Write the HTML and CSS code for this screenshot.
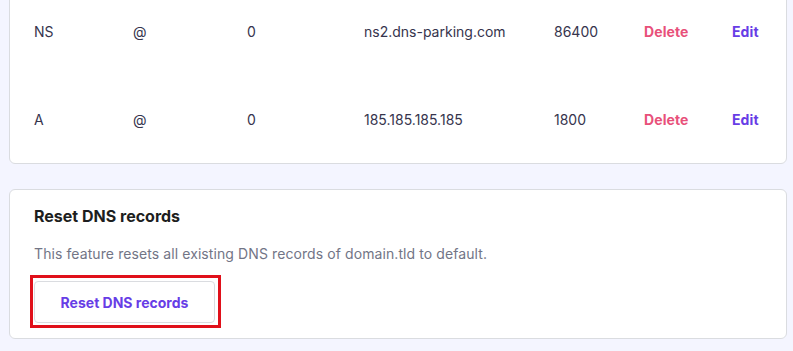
FILE: index.html
```html
<!DOCTYPE html>
<html lang="en">
<head>
<meta charset="utf-8">
<title>DNS records</title>
<link rel="stylesheet" href="styles.css">
</head>
<body>
<div class="page">
  <section class="card records">
    <div class="row">
      <span class="cell">NS</span>
      <span class="cell">@</span>
      <span class="cell">0</span>
      <span class="cell">ns2.dns-parking.com</span>
      <span class="cell">86400</span>
      <a class="cell action delete" href="#">Delete</a>
      <a class="cell action edit" href="#">Edit</a>
    </div>
    <div class="row">
      <span class="cell">A</span>
      <span class="cell">@</span>
      <span class="cell">0</span>
      <span class="cell">185.185.185.185</span>
      <span class="cell">1800</span>
      <a class="cell action delete" href="#">Delete</a>
      <a class="cell action edit" href="#">Edit</a>
    </div>
  </section>
  <section class="card reset">
    <h2 class="reset-title">Reset DNS records</h2>
    <p class="reset-text">This feature resets all existing DNS records of domain.tld to default.</p>
    <div class="highlight">
      <button class="btn-outline" type="button">Reset DNS records</button>
    </div>
  </section>
</div>
</body>
</html>
```
FILE: styles.css
```css
* { box-sizing: border-box; }
html, body {
  margin: 0;
  padding: 0;
  background: #f4f5ff;
  font-family: "Inter", "DejaVu Sans", sans-serif;
  color: #36344d;
}
.page {
  padding: 0 6px 0 9px;
  display: flex;
  flex-direction: column;
  gap: 25px;
}
.card {
  background: #fff;
  border: 1px solid #dadce0;
  border-radius: 6px;
}
.records {
  margin-top: -20px;
  padding-top: 6px;
}
.row {
  display: grid;
  grid-template-columns: 99px 114px 117px 190px 90px 88px 1fr;
  align-items: center;
  height: 88px;
  padding-left: 24px;
  font-size: 14px;
}
.cell { white-space: nowrap; }
.action {
  text-decoration: none;
  font-weight: 700;
  letter-spacing: 0.1px;
}
.delete { color: #e8507a; }
.edit { color: #673de6; }
.reset {
  padding: 14px 24px 10px;
}
.reset-title {
  margin: 0;
  font-size: 16px;
  line-height: 24px;
  font-weight: 700;
  color: #1d1e20;
}
.reset-text {
  margin: 16px 0 0;
  font-size: 14px;
  line-height: 20px;
  letter-spacing: 0.09px;
  color: #727586;
}
.highlight {
  display: inline-block;
  margin-top: 11px;
  margin-left: -4px;
  border: 3px solid #e0101a;
  padding: 3px 3px 2px 1px;
}
.btn-outline {
  display: block;
  width: 181px;
  height: 42px;
  background: #fff;
  border: 1px solid #dadce0;
  border-radius: 4px;
  font-family: inherit;
  font-size: 14px;
  font-weight: 700;
  color: #673de6;
  cursor: pointer;
}
```
